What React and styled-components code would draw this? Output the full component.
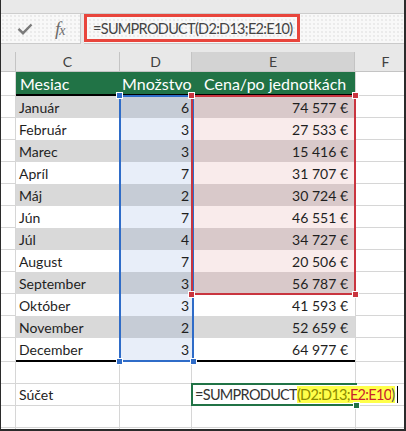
import React from "react";
import styled, { createGlobalStyle, css } from "styled-components";

const GlobalStyle = createGlobalStyle`
  html, body { margin: 0; padding: 0; background: #ffffff; }
  body { font-family: Lato, "Noto Sans", sans-serif; }
`;

const COLS = "15px 104px 72px 163px 61px";
const GRID = "#d6d6d6";
const ROW = 22;

const dotted = css`
  background-color: #f8f8f8;
  background-image: radial-gradient(circle, #e0e0e0 0.55px, transparent 0.9px);
  background-size: 4px 4px;
`;

const formulaFont = css`
  font-size: 14.5px;
  letter-spacing: -0.7px;
`;

const Frame = styled.div`
  position: relative;
  width: 406px;
  height: 431px;
  box-sizing: border-box;
  border-left: 1px solid #2b2b2b;
  border-right: 2px solid #2b2b2b;
  border-bottom: 2px solid #2b2b2b;
  background: #e8e8e8;
  overflow: hidden;
  display: flex;
  flex-direction: column;
`;

const TopStrip = styled.div`
  flex: none;
  height: 14px;
  box-sizing: border-box;
  border-bottom: 1px solid #cdcdcd;
  background: #e9e9e9;
`;

const FormulaBar = styled.div`
  flex: none;
  height: 30px;
  display: flex;
  gap: 3px;
`;

const IconBox = styled.div`
  ${dotted};
  flex: none;
  width: 80px;
  box-sizing: border-box;
  border-right: 1px solid #cacaca;
  border-bottom: 1px solid #cacaca;
  display: flex;
  align-items: center;
  padding-left: 16px;
`;

const Fx = styled.span`
  margin-left: 22px;
  font-family: "Liberation Serif", "DejaVu Serif", serif;
  font-style: italic;
  font-size: 19px;
  color: #6c6c6c;
  line-height: 1;
  & > small {
    font-size: 14px;
    margin-left: -1px;
  }
`;

const InputArea = styled.div`
  ${dotted};
  flex: 1;
  box-sizing: border-box;
  border-bottom: 1px solid #cacaca;
`;

const FormulaBox = styled.div`
  box-sizing: border-box;
  width: 216px;
  height: 28px;
  border: 3px solid #e8453c;
  display: flex;
  align-items: center;
  padding-left: 6px;
  ${formulaFont};
  color: #444444;
  white-space: nowrap;
  overflow: hidden;
`;

const Sheet = styled.div`
  position: relative;
  flex: none;
  margin-top: 8px;
  display: flex;
  flex-direction: column;
  background: #ffffff;
`;

const Row = styled.div`
  flex: none;
  display: grid;
  grid-template-columns: ${COLS};
  height: ${(p) => p.$h}px;
  background: ${(p) => (p.$head ? "#e8e8e8" : "#ffffff")};
`;

const Cell = styled.div`
  box-sizing: border-box;
  min-width: 0;
  display: flex;
  align-items: center;
  white-space: nowrap;
`;

const ColHead = styled(Cell)`
  justify-content: center;
  font-size: 14px;
  color: #404040;
  background: ${(p) => (p.$sel ? "#d3d3d3" : "transparent")};
  border-bottom: 1px solid #c4c4c4;
  border-right: ${(p) => (p.$last ? "none" : "1px solid #c4c4c4")};
`;

const Blank = styled(Cell)`
  border-bottom: 1px solid ${GRID};
  border-right: ${(p) => (p.$r ? `1px solid ${GRID}` : "none")};
  border-left: ${(p) => (p.$l ? `1px solid ${GRID}` : "none")};
  font-size: 14px;
  color: #222222;
  padding-left: ${(p) => p.$pl || 0}px;
`;

const Title = styled(Cell)`
  background: #217346;
  color: #ffffff;
  font-size: 16px;
  padding-left: ${(p) => p.$pl}px;
  border-bottom: 2px solid #000000;
`;

const TONES = {
  plain: ["#d9d9d9", "#ffffff"],
  blue: ["#c6ccd6", "#e8eef9"],
  red: ["#d9c9ca", "#f9ebeb"],
};

const Data = styled(Cell)`
  background: ${(p) => TONES[p.$tone][p.$band ? 0 : 1]};
  justify-content: ${(p) => (p.$num ? "flex-end" : "flex-start")};
  padding: 0 ${(p) => p.$pr || 0}px 0 ${(p) => p.$pl || 0}px;
  font-size: 14px;
  color: #1f1f1f;
  border-bottom: ${(p) => (p.$last ? "2px solid #000000" : "none")};
`;

const ActiveCell = styled(Cell)`
  position: relative;
  overflow: visible;
  padding-left: 3px;
  ${formulaFont};
  color: #333333;
  border-bottom: 1px solid ${GRID};
  &::after {
    content: "";
    position: absolute;
    top: -1px;
    left: -1px;
    right: -2px;
    bottom: -1px;
    border: 2px solid #217346;
    border-right: none;
    pointer-events: none;
  }
`;

const Ref = styled.span`
  flex: none;
  background: #ffff4a;
  color: ${(p) => p.$c};
`;

const Caret = styled.span`
  flex: none;
  display: inline-block;
  width: 1px;
  height: 17px;
  margin-left: 2px;
  background: #000000;
`;

const FillHandle = styled.span`
  position: absolute;
  right: -5px;
  bottom: -4px;
  width: 5px;
  height: 5px;
  background: #217346;
  border: 1px solid #ffffff;
  z-index: 2;
`;

const Selection = styled.div`
  position: absolute;
  box-sizing: border-box;
  border: 2px solid ${(p) => p.$color};
  pointer-events: none;
`;

const Handle = styled.span`
  position: absolute;
  width: 5px;
  height: 5px;
  background: ${(p) => p.$color};
  border: 1px solid #ffffff;
  ${(p) => (p.$top ? "top: -5px;" : "bottom: -5px;")}
  ${(p) => (p.$left ? "left: -5px;" : "right: -5px;")}
`;

const MONTHS = [
  ["Január", 6, "74 577 €"],
  ["Február", 3, "27 533 €"],
  ["Marec", 3, "15 416 €"],
  ["Apríl", 7, "31 707 €"],
  ["Máj", 2, "30 724 €"],
  ["Jún", 7, "46 551 €"],
  ["Júl", 4, "34 727 €"],
  ["August", 7, "20 506 €"],
  ["September", 3, "56 787 €"],
  ["Október", 3, "41 593 €"],
  ["November", 2, "52 659 €"],
  ["December", 3, "64 977 €"],
].map(([m, q, p]) => [m, q, p.replace(/ /g, "\u00a0")]);

const RED_ROWS = 9;
const HEAD_H = 20 + 24;
const X = { d: 119, e: 191, f: 354 };

function CheckIcon() {
  return (
    <svg width="16" height="12" viewBox="0 0 16 12">
      <path
        d="M1.5 5.8 L6 10.2 L14.5 1.5"
        fill="none"
        stroke="#7a7a7a"
        strokeWidth="2.4"
        strokeLinejoin="miter"
      />
    </svg>
  );
}

function SelBox({ color, left, top, width, height, corners }) {
  return (
    <Selection $color={color} style={{ left, top, width, height }}>
      {corners.map(([t, l]) => (
        <Handle key={`${t}${l}`} $color={color} $top={t} $left={l} />
      ))}
    </Selection>
  );
}

export default function App() {
  const blueTop = HEAD_H - 1;
  const blueH = MONTHS.length * ROW + 3;
  const redH = RED_ROWS * ROW + 2;
  return (
    <>
      <GlobalStyle />
      <Frame>
        <TopStrip />
        <FormulaBar>
          <IconBox>
            <CheckIcon />
            <Fx>
              f<small>x</small>
            </Fx>
          </IconBox>
          <InputArea>
            <FormulaBox>=SUMPRODUCT(D2:D13;E2:E10)</FormulaBox>
          </InputArea>
        </FormulaBar>
        <Sheet>
          <Row $h={20} $head>
            <ColHead />
            <ColHead>C</ColHead>
            <ColHead>D</ColHead>
            <ColHead $sel>E</ColHead>
            <ColHead $last>F</ColHead>
          </Row>
          <Row $h={24}>
            <Blank $r />
            <Title $pl={4}>Mesiac</Title>
            <Title $pl={2}>Množstvo</Title>
            <Title $pl={12}>Cena/po jednotkách</Title>
            <Blank $l />
          </Row>
          {MONTHS.map(([m, q, p], i) => {
            const band = i % 2 === 0;
            const last = i === MONTHS.length - 1;
            return (
              <Row key={m} $h={last ? ROW + 2 : ROW}>
                <Blank $r />
                <Data $tone="plain" $band={band} $pl={3} $last={last}>
                  {m}
                </Data>
                <Data $tone="blue" $band={band} $num $pr={3} $last={last}>
                  {q}
                </Data>
                <Data
                  $tone={i < RED_ROWS ? "red" : "plain"}
                  $band={band}
                  $num
                  $pr={7}
                  $last={last}
                >
                  {p}
                </Data>
                <Blank $l />
              </Row>
            );
          })}
          <Row $h={ROW}>
            <Blank $r />
            <Blank $r />
            <Blank $r />
            <Blank />
            <Blank $l />
          </Row>
          <Row $h={ROW}>
            <Blank $r />
            <Blank $r $pl={3}>
              Súčet
            </Blank>
            <Blank $r />
            <ActiveCell>
              <span>=SUMPRODUCT</span>
              <Ref $c="#8c8a00">(D2:D13;</Ref>
              <Ref $c="#c8232c">E2:E10</Ref>
              <Ref $c="#555555">)</Ref>
              <Caret />
              <FillHandle />
            </ActiveCell>
            <Blank />
          </Row>
          <Row $h={ROW}>
            <Blank $r />
            <Blank $r />
            <Blank $r />
            <Blank />
            <Blank $l />
          </Row>
          <Row $h={ROW}>
            <Blank $r />
            <Blank $r />
            <Blank $r />
            <Blank />
            <Blank $l />
          </Row>

          <SelBox
            color="#2f6cc8"
            left={X.d - 1}
            top={blueTop}
            width={X.e - X.d + 3}
            height={blueH}
            corners={[
              [true, true],
              [false, true],
              [false, false],
            ]}
          />
          <SelBox
            color="#c9353f"
            left={X.e - 1}
            top={blueTop}
            width={X.f - X.e + 2}
            height={redH}
            corners={[
              [true, true],
              [true, false],
              [false, true],
              [false, false],
            ]}
          />
        </Sheet>
      </Frame>
    </>
  );
}
